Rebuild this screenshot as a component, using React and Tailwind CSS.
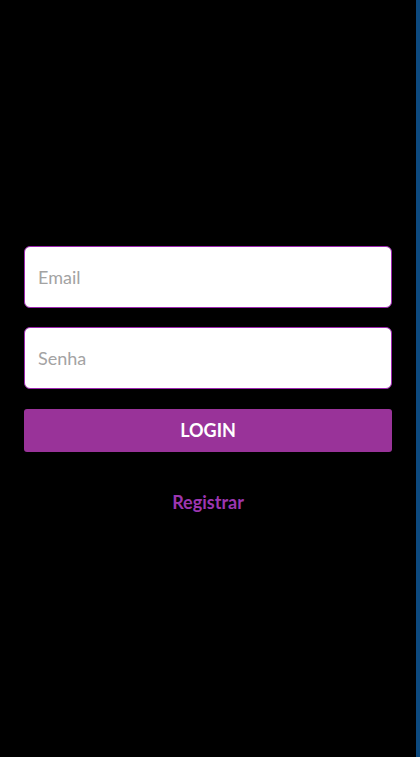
export default function App() {
  return (
    <div
      className="flex h-[757px] w-[420px] bg-black"
      style={{ fontFamily: 'Lato, "Noto Sans", sans-serif' }}
    >
      <div className="flex w-[416px] flex-col px-6 pt-[246px]">
        <input
          type="text"
          placeholder="Email"
          className="h-[62px] w-full rounded-[6px] border border-[#9c27b0] bg-white px-[13px] text-[18px] text-black outline-none placeholder:text-[#a3a3a3]"
        />
        <input
          type="password"
          placeholder="Senha"
          className="mt-[19px] h-[62px] w-full rounded-[6px] border border-[#9c27b0] bg-white px-[13px] text-[18px] text-black outline-none placeholder:text-[#a3a3a3]"
        />
        <button className="mt-[20px] h-[43px] w-full rounded-[3px] bg-[#993399] text-[18px] font-bold text-white">
          LOGIN
        </button>
        <div className="mt-[38px] text-center text-[18px] leading-[24px] font-bold text-[#9c36b0]">
          Registrar
        </div>
      </div>
      <div className="h-full w-[4px] bg-[#0d4a7f]" />
    </div>
  );
}
